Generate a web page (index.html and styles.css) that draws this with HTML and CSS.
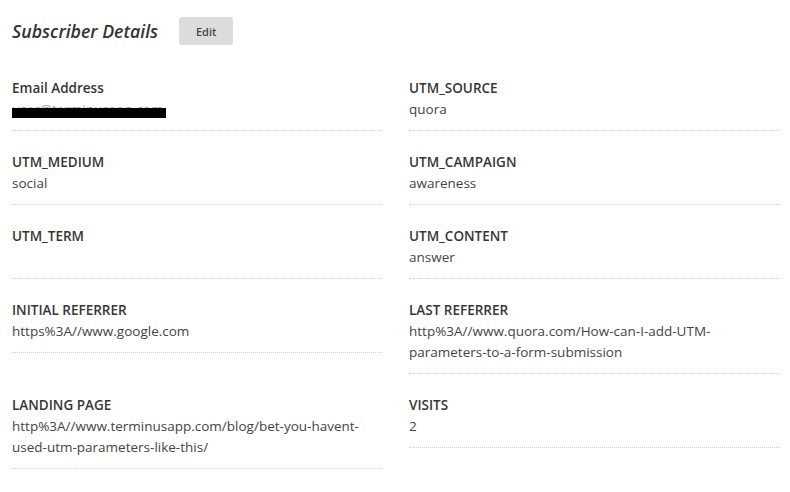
FILE: index.html
```html
<!DOCTYPE html>
<html>
<head>
<meta charset="utf-8">
<link rel="stylesheet" href="styles.css">
</head>
<body>
<div class="page">
  <div class="header">
    <h2 class="title">Subscriber Details</h2>
    <button class="edit-btn">Edit</button>
  </div>
  <div class="fields">
    <div class="field">
      <div class="label">Email Address</div>
      <div class="value"><span class="redacted">user@terminusapp.com<span class="redact-bar"></span></span></div>
    </div>
    <div class="field">
      <div class="label">UTM_SOURCE</div>
      <div class="value">quora</div>
    </div>
    <div class="field">
      <div class="label">UTM_MEDIUM</div>
      <div class="value">social</div>
    </div>
    <div class="field">
      <div class="label">UTM_CAMPAIGN</div>
      <div class="value">awareness</div>
    </div>
    <div class="field">
      <div class="label">UTM_TERM</div>
      <div class="value"></div>
    </div>
    <div class="field">
      <div class="label">UTM_CONTENT</div>
      <div class="value">answer</div>
    </div>
    <div class="field">
      <div class="label">INITIAL REFERRER</div>
      <div class="value">https%3A//www.google.com</div>
    </div>
    <div class="field">
      <div class="label">LAST REFERRER</div>
      <div class="value">http%3A//www.quora.com/How-can-I-add-UTM-<br>parameters-to-a-form-submission</div>
    </div>
    <div class="field">
      <div class="label">LANDING PAGE</div>
      <div class="value">http%3A//www.terminusapp.com/blog/bet-you-havent-<br>used-utm-parameters-like-this/</div>
    </div>
    <div class="field">
      <div class="label">VISITS</div>
      <div class="value">2</div>
    </div>
  </div>
</div>
</body>
</html>
```

FILE: styles.css
```css
html, body {
  margin: 0;
  padding: 0;
  background: #ffffff;
}

body {
  font-family: "Open Sans", "Liberation Sans", sans-serif;
  color: #444444;
}

.page {
  padding: 17px 11px 0 12px;
}

.header {
  display: flex;
  align-items: center;
  gap: 21px;
  height: 28px;
}

.title {
  margin: 0;
  font-size: 17.75px;
  font-style: italic;
  font-weight: 600;
  color: #333333;
  line-height: 28px;
}

.edit-btn {
  width: 54px;
  height: 28px;
  border: none;
  border-radius: 3px;
  background: #dcdcdc;
  color: #444444;
  font-family: "Open Sans", "Liberation Sans", sans-serif;
  font-size: 11px;
  font-weight: 600;
  padding: 0;
}

.fields {
  display: grid;
  grid-template-columns: 1fr 1fr;
  column-gap: 27px;
  row-gap: 21px;
  align-items: start;
  margin-top: 33px;
}

.field {
  border-bottom: 1px dotted #cfcfcf;
  padding-bottom: 10px;
}

.label {
  font-size: 13.5px;
  font-weight: 600;
  line-height: 21px;
  color: #363636;
}

.value {
  font-size: 13.5px;
  line-height: 21px;
  min-height: 21px;
  color: #444444;
}

.redacted {
  position: relative;
  display: inline-block;
  vertical-align: top;
  height: 21px;
  color: #9a9a9a;
  width: 154px;
  overflow: hidden;
  white-space: nowrap;
}

.redact-bar {
  position: absolute;
  left: 0;
  top: 9px;
  width: 154px;
  height: 10px;
  background: #000000;
}
```
